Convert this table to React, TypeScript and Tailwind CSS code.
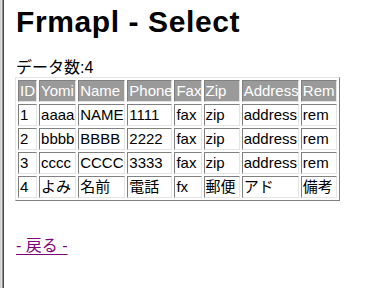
import React from "react";

const headers = ["ID", "Yomi", "Name", "Phone", "Fax", "Zip", "Address", "Rem"];
const widths = ["w-[19px]", "w-[37px]", "w-[47px]", "w-[45px]", "w-[27px]", "w-[36px]", "w-[57px]", "w-[36px]"];
const rows = [
  ["1", "aaaa", "NAME", "1111", "fax", "zip", "address", "rem"],
  ["2", "bbbb", "BBBB", "2222", "fax", "zip", "address", "rem"],
  ["3", "cccc", "CCCC", "3333", "fax", "zip", "address", "rem"],
  ["4", "よみ", "名前", "電話", "fx", "郵便", "アド", "備考"],
];

const font = "font-['Liberation_Sans','Noto_Sans_CJK_JP',sans-serif]";
const inset = "border border-t-[#808080] border-l-[#808080] border-r-[#e4e4e4] border-b-[#e4e4e4]";

export default function App() {
  return (
    <div className={`flex min-h-[288px] w-[387px] bg-white text-black ${font}`}>
      {/* window frame edge */}
      <div className="flex h-[288px] shrink-0">
        <div className="w-px bg-[#d0d0d0]" />
        <div className="w-px bg-[#e6e6e6]" />
        <div className="w-px bg-[#8c8c8c]" />
        <div className="w-px bg-[#4a4a4a]" />
      </div>
      <div className="flex flex-col pl-[12px]">
        <h1 className="mt-[5px] h-[34px] text-[30px] leading-[34px] font-bold tracking-[0.6px] whitespace-nowrap">
          Frmapl - Select
        </h1>
        <div className="mt-[19px] h-[19px] text-[16px] leading-[19px]">データ数:4</div>
        <table className="table-fixed w-[325px] -ml-px border-separate border-spacing-[2px] border border-t-[#e4e4e4] border-l-[#e4e4e4] border-r-[#808080] border-b-[#808080] self-start">
          <thead>
            <tr>
              {headers.map((h, i) => (
                <th
                  key={h}
                  className={`${widths[i]} ${inset} bg-[#9a9a9a] bg-[radial-gradient(#b4b4b4_0.6px,transparent_0.7px)] bg-[length:4px_4px] p-px text-left text-[15px] leading-[18px] font-normal text-white whitespace-nowrap`}
                >
                  {h}
                </th>
              ))}
            </tr>
          </thead>
          <tbody>
            {rows.map((r) => (
              <tr key={r[0]}>
                {r.map((c, i) => (
                  <td key={i} className={`${inset} p-px text-[15px] leading-[18px] whitespace-nowrap`}>
                    {c}
                  </td>
                ))}
              </tr>
            ))}
          </tbody>
        </table>
        <div className="mt-[35px] text-[16px] leading-[19px]">
          <a href="#" className="text-[#800080] underline underline-offset-[3px]">
            - 戻る -
          </a>
        </div>
      </div>
    </div>
  );
}
